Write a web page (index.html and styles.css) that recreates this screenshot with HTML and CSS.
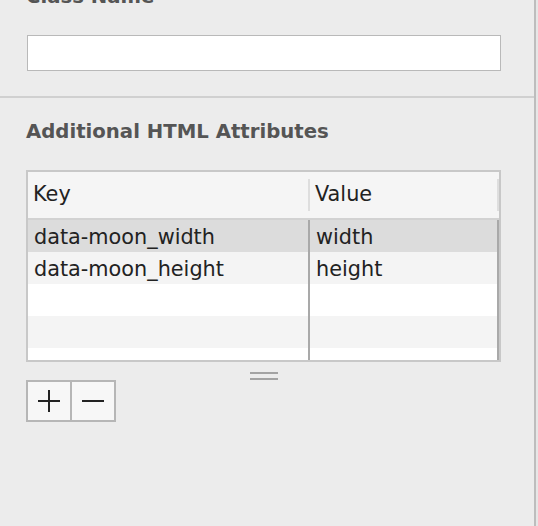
FILE: index.html
```html
<!DOCTYPE html>
<html>
<head>
<meta charset="utf-8">
<link rel="stylesheet" href="styles.css">
</head>
<body>
<div class="panel">
  <section class="sec sec-class">
    <h2 class="sec-title title-cut">Class Name</h2>
    <div class="text-input"></div>
  </section>
  <div class="divider"></div>
  <section class="sec sec-attrs">
    <h2 class="sec-title">Additional HTML Attributes</h2>
    <div class="table">
      <div class="thead">
        <div class="th th-key">Key</div>
        <div class="th-sep"></div>
        <div class="th th-val">Value</div>
        <div class="th-sep th-sep-end"></div>
      </div>
      <div class="tbody">
        <div class="rows">
          <div class="row selected"><div class="cell c-key">data-moon_width</div><div class="cell c-val">width</div></div>
          <div class="row alt"><div class="cell c-key">data-moon_height</div><div class="cell c-val">height</div></div>
          <div class="row"><div class="cell c-key"></div><div class="cell c-val"></div></div>
          <div class="row alt"><div class="cell c-key"></div><div class="cell c-val"></div></div>
          <div class="row short"><div class="cell c-key"></div><div class="cell c-val"></div></div>
        </div>
        <div class="col-line col-line-mid"></div>
        <div class="col-line col-line-end"></div>
      </div>
    </div>
    <div class="grip"><span></span><span></span></div>
    <div class="btn-group">
      <div class="btn">
        <svg width="22" height="22" viewBox="0 0 22 22"><path d="M11 0V22M0 11H22" stroke="#222" stroke-width="2" fill="none"/></svg>
      </div>
      <div class="btn">
        <svg width="22" height="22" viewBox="0 0 22 22"><path d="M0 11H22" stroke="#222" stroke-width="2" fill="none"/></svg>
      </div>
    </div>
  </section>
</div>
</body>
</html>
```
FILE: styles.css
```css
html, body {
  margin: 0;
  padding: 0;
  background: #e6e6e6;
}
body {
  width: 538px;
  height: 526px;
  overflow: hidden;
  font-family: "DejaVu Sans", Verdana, sans-serif;
}
.panel {
  display: flow-root;
  width: 536px;
  height: 526px;
  box-sizing: border-box;
  background: #ececec;
  border-right: 2px solid #bdbdbd;
}
.sec {
  padding-left: 26px;
}
.sec-title {
  margin: 0;
  font-size: 19.7px;
  font-weight: bold;
  color: #555555;
  line-height: 24px;
  white-space: nowrap;
}
.title-cut {
  margin-top: -15px;
}
.sec-class {
  padding-bottom: 25px;
}
.text-input {
  margin-top: 26px;
  margin-left: 1px;
  width: 474px;
  height: 36px;
  box-sizing: border-box;
  background: #ffffff;
  border: 1px solid #b9b9b9;
}
.divider {
  height: 2px;
  background: #d0d0d0;
  width: 534px;
}
.sec-attrs {
  padding-top: 22px;
}
.table {
  margin-top: 26px;
  width: 475px;
  height: 192px;
  box-sizing: border-box;
  border: 2px solid #c8c8c8;
  background: #ffffff;
  display: flex;
  flex-direction: column;
}
.thead {
  flex: none;
  height: 48px;
  background: #f5f5f5;
  border-bottom: 2px solid #d2d2d2;
  display: flex;
  align-items: center;
  box-sizing: border-box;
}
.th {
  font-size: 20.8px;
  color: #222;
  line-height: 24px;
  padding-bottom: 2px;
  box-sizing: border-box;
}
.th-key {
  width: 280px;
  padding-left: 5px;
}
.th-val {
  width: 187px;
  padding-left: 5px;
}
.th-sep {
  width: 2px;
  height: 32px;
  background: #dedede;
}
.tbody {
  flex: 1;
  position: relative;
  overflow: hidden;
}
.rows {
  display: flex;
  flex-direction: column;
}
.row {
  display: flex;
  flex: none;
  height: 32px;
  background: #ffffff;
}
.row.alt { background: #f4f4f4; }
.row.selected { background: #dcdcdc; }
.cell {
  font-size: 20.8px;
  line-height: 32px;
  color: #222;
  padding-top: 1px;
  box-sizing: border-box;
  white-space: nowrap;
}
.c-key {
  width: 282px;
  padding-left: 6px;
}
.c-val {
  width: 187px;
  padding-left: 6px;
}
.col-line {
  position: absolute;
  top: 0;
  bottom: 0;
  width: 2px;
  background: #a9a9a9;
}
.col-line-mid { left: 280px; }
.col-line-end { left: 469px; }
.grip {
  width: 28px;
  margin: 10px 0 0 224px;
  display: flex;
  flex-direction: column;
  gap: 4px;
}
.grip span {
  display: block;
  height: 2px;
  background: #a3a3a3;
}
.btn-group {
  display: flex;
  width: 90px;
  height: 42px;
  box-sizing: border-box;
  border: 2px solid #b6b6b6;
  background: #f7f7f7;
}
.btn {
  flex: 1;
  display: flex;
  align-items: center;
  justify-content: center;
}
.btn + .btn {
  border-left: 2px solid #b6b6b6;
}
```
